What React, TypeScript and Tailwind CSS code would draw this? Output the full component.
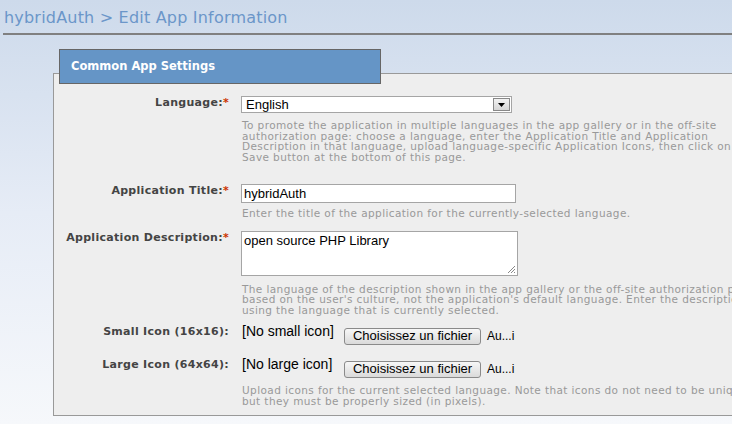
export default function App() {
  return (
    <div className="w-[732px] h-[424px] overflow-hidden bg-gradient-to-b from-[#cddaeb] via-[#e6ecf6] to-[#f6f8fb] font-['DejaVu_Sans',sans-serif]">
      <h1 className="h-[33px] pl-[4px] pt-[8px] text-[16px] leading-[20px] text-[#6b96c9] tracking-[0.2px] whitespace-nowrap">
        hybridAuth &gt; Edit App Information
      </h1>
      <div className="ml-[3px] h-[2px] bg-[#808080]" />

      <div className="ml-[53px] mt-[14px] w-[900px]">
        <div className="relative z-10 ml-[6px] flex h-[35px] w-[322px] items-center border border-[#666] bg-[#6595c6] pl-[11px] text-[11.5px] font-bold text-white">
          Common App Settings
        </div>

        <div className="-mt-[11px] border border-[#999] bg-[#eeeeee] pt-[22px] pb-[9px] text-[#999]">
          {/* Language */}
          <div className="flex gap-[12px]">
            <Label text="Language:" required />
            <div>
              <div className="flex h-[17px] w-[271px] items-center justify-between border border-[#a5a5a5] bg-white pl-[4px] pr-[1px] font-['Liberation_Sans',sans-serif] text-[13px] text-black">
                <span>English</span>
                <span className="flex h-[13px] w-[17px] items-center justify-center border border-[#888] bg-gradient-to-b from-[#f2f2f2] to-[#d6d6d6]">
                  <svg width="7" height="4" viewBox="0 0 7 4">
                    <path d="M0 0h7L3.5 4z" fill="#000" />
                  </svg>
                </span>
              </div>
              <Help className="mt-[7px]">
                To promote the application in multiple languages in the app gallery or in the off-site
                <br />
                authorization page: choose a language, enter the Application Title and Application
                <br />
                Description in that language, upload language-specific Application Icons, then click on the
                <br />
                Save button at the bottom of this page.
              </Help>
            </div>
          </div>

          {/* Title */}
          <div className="mt-[22px] flex gap-[12px]">
            <Label text="Application Title:" required />
            <div>
              <div className="flex h-[19px] w-[275px] items-center border border-[#a5a5a5] bg-white pl-[2px] font-['Liberation_Sans',sans-serif] text-[13px] text-black">
                hybridAuth
              </div>
              <Help className="mt-[5px]">
                Enter the title of the application for the currently-selected language.
              </Help>
            </div>
          </div>

          {/* Description */}
          <div className="mt-[12px] flex gap-[12px]">
            <Label text="Application Description:" required />
            <div>
              <div className="relative h-[45px] w-[277px] border border-[#a5a5a5] bg-white pl-[2px] pt-[1px] font-['Liberation_Sans',sans-serif] text-[13px] leading-[16px] text-black">
                open source PHP Library
                <svg className="absolute bottom-[1px] right-[1px]" width="9" height="9" viewBox="0 0 9 9">
                  <path d="M8 1L1 8M8 4L4 8M8 7L7 8" stroke="#888" strokeWidth="1" />
                </svg>
              </div>
              <Help className="mt-[8px]">
                The language of the description shown in the app gallery or the off-site authorization page is determined
                <br />
                based on the user's culture, not the application's default language. Enter the description in
                <br />
                using the language that is currently selected.
              </Help>
            </div>
          </div>

          {/* Small icon */}
          <div className="mt-[6px] flex gap-[12px]">
            <Label text="Small Icon (16x16):" top />
            <FileRow empty="[No small icon]" />
          </div>

          {/* Large icon */}
          <div className="mt-[9px] flex gap-[12px]">
            <Label text="Large Icon (64x64):" top />
            <div>
              <FileRow empty="[No large icon]" />
              <Help className="mt-[7px]">
                Upload icons for the current selected language. Note that icons do not need to be unique
                <br />
                but they must be properly sized (in pixels).
              </Help>
            </div>
          </div>
        </div>
      </div>
    </div>
  );
}

function Label({ text, required, top }: { text: string; required?: boolean; top?: boolean }) {
  return (
    <div
      className={`w-[175px] shrink-0 text-right text-[11px] font-bold leading-[13px] tracking-[0.3px] text-[#444] ${
        top ? "pt-[4px]" : ""
      }`}
    >
      {text}
      {required && <span className="text-[#cc3300]">*</span>}
    </div>
  );
}

function Help({ children, className = "" }: { children: React.ReactNode; className?: string }) {
  return (
    <p className={`whitespace-nowrap pl-[1px] text-[10.5px] leading-[10.5px] tracking-[0.4px] text-[#999] ${className}`}>
      {children}
    </p>
  );
}

function FileRow({ empty }: { empty: string }) {
  return (
    <div className="flex items-start font-['Liberation_Sans',sans-serif] text-black">
      <span className="w-[103px] pl-[1px] pt-[2px] text-[14px] leading-[16px]">{empty}</span>
      <div className="mt-[6px] flex items-center">
        <span className="flex h-[17px] w-[137px] items-center justify-center rounded-[3px] border border-[#8a8a8a] bg-gradient-to-b from-[#f7f7f7] to-[#dadada] text-[13px]">
          Choisissez un fichier
        </span>
        <span className="ml-[6px] text-[12px]">Au...i</span>
      </div>
    </div>
  );
}
